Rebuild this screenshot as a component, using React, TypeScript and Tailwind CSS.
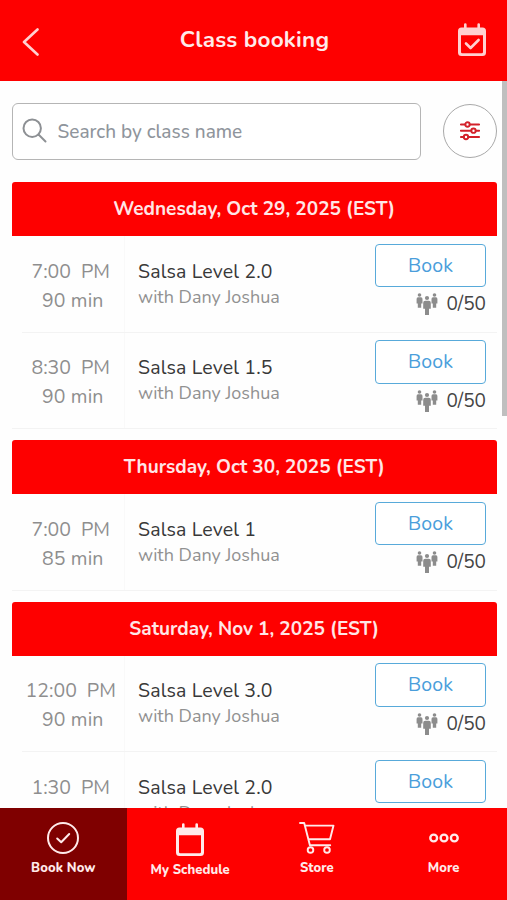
import { useState } from "react";
import type { ReactNode } from "react";

interface ClassItem {
  id: string;
  time: string;
  period: string;
  duration: string;
  name: string;
  teacher: string;
  spots: string;
}

interface Day {
  label: string;
  classes: ClassItem[];
}

const days: Day[] = [
  {
    label: "Wednesday, Oct 29, 2025 (EST)",
    classes: [
      { id: "w1", time: "7:00", period: "PM", duration: "90 min", name: "Salsa Level 2.0", teacher: "Dany Joshua", spots: "0/50" },
      { id: "w2", time: "8:30", period: "PM", duration: "90 min", name: "Salsa Level 1.5", teacher: "Dany Joshua", spots: "0/50" },
    ],
  },
  {
    label: "Thursday, Oct 30, 2025 (EST)",
    classes: [
      { id: "t1", time: "7:00", period: "PM", duration: "85 min", name: "Salsa Level 1", teacher: "Dany Joshua", spots: "0/50" },
    ],
  },
  {
    label: "Saturday, Nov 1, 2025 (EST)",
    classes: [
      { id: "s1", time: "12:00", period: "PM", duration: "90 min", name: "Salsa Level 3.0", teacher: "Dany Joshua", spots: "0/50" },
      { id: "s2", time: "1:30", period: "PM", duration: "90 min", name: "Salsa Level 2.0", teacher: "Dany Joshua", spots: "0/50" },
    ],
  },
];

function CalendarIcon({ checked = false }: { checked?: boolean }) {
  return (
    <svg className="w-[30px] h-[33px]" viewBox="0 0 30 33" fill="none">
      <path
        fill="currentColor"
        fillRule="evenodd"
        d="M7 1.5a1.3 1.3 0 0 1 2.6 0V4.500h10.800V1.500a1.300 1.300 0 0 1 2.600 0V4.500h2.500a3.500 3.500 0 0 1 3.500 3.500V29.500a3.500 3.500 0 0 1-3.500 3.500h-21A3.500 3.500 0 0 1 1 29.500V8a3.500 3.500 0 0 1 3.500-3.500H7ZM4 12.200V29a1.300 1.300 0 0 0 1.300 1.300h19.400A1.300 1.300 0 0 0 26 29V12.200Z"
      />
      {checked && (
        <path d="M9 20.500l4.600 4.500 8-8" stroke="currentColor" strokeWidth="2.600" strokeLinecap="round" strokeLinejoin="round" />
      )}
    </svg>
  );
}

function FilterIcon() {
  return (
    <svg className="w-5 h-5" viewBox="0 0 20 20" fill="none" stroke="currentColor" strokeWidth="1.900" strokeLinecap="round">
      <path d="M.8 3.500h4.500M9.700 3.500h9.500M.8 9.700h10.500M15.700 9.700h3.500M.8 16h3M8.200 16h11" />
      <circle cx="7.500" cy="3.500" r="2.200" />
      <circle cx="13.500" cy="9.700" r="2.200" />
      <circle cx="6" cy="16" r="2.200" />
    </svg>
  );
}

function PeopleIcon() {
  return (
    <svg className="w-[22px] h-[22px] text-[#8c8c8c]" viewBox="0 0 22 22" fill="currentColor">
      <circle cx="3.500" cy="2" r="1.800" />
      <path d="M2 4.300h3q1.500 0 1.500 1.600v4.700H5.200V14.800h-3.400V10.600H.6V6q0-1.700 1.400-1.700Z" />
      <circle cx="18.500" cy="2" r="1.800" />
      <path d="M17 4.300h3q1.400 0 1.400 1.700v4.600h-1.200V14.800h-3.400V10.600h-1.300V5.900q0-1.600 1.500-1.600Z" />
      <circle cx="11" cy="5" r="2.100" />
      <path d="M9.200 7.700h3.600q2 0 2 2v6h-1.800V22H9V15.700H7.200V9.700q0-2 2-2Z" />
    </svg>
  );
}

function ClassRow({ item, last }: { item: ClassItem; last: boolean }) {
  return (
    <div className={`flex h-[96.5px] border-b border-[#f3f3f3] ${last ? "" : "ml-[10px]"}`}>
      <div
        className={`shrink-0 border-r border-[#f9f9f9] pt-[20.5px] text-center text-[19.5px] leading-[29px] text-[#8e8e8e] ${
          last ? "w-[113.5px] pl-[10px]" : "w-[103.5px]"
        }`}
      >
        <div className="-ml-1 flex justify-center gap-[10px] whitespace-nowrap">
          <span>{item.time}</span>
          <span>{item.period}</span>
        </div>
        <div className="tracking-[0.15px]">{item.duration}</div>
      </div>
      <div className="flex-1 pt-[22.5px] pl-[13px] whitespace-nowrap">
        <div className="text-[19.5px] leading-[26px] tracking-[0.15px] text-[#383838]">{item.name}</div>
        <div className="text-[18px] leading-[25.5px] text-[#919191]">with {item.teacher}</div>
      </div>
      <div className="mr-[11px] flex w-[111px] shrink-0 flex-col pt-[7.5px]">
        <button className="h-[43.5px] rounded-[4px] border-[1.5px] border-[#58aada] bg-white text-[19.5px] leading-none tracking-[0.1px] text-[#4a9edb]">
          Book
        </button>
        <div className="mt-[4px] flex h-[26px] items-center justify-end gap-2">
          <PeopleIcon />
          <span className="text-[19px] leading-[26px] text-[#444]">{item.spots}</span>
        </div>
      </div>
    </div>
  );
}

const tabs: { id: string; label: string; icon: ReactNode; className: string }[] = [
  {
    id: "book",
    label: "Book Now",
    className: "pt-[14px] gap-[6px]",
    icon: (
      <svg className="size-8" viewBox="0 0 32 32" fill="none" stroke="currentColor" strokeWidth="2" strokeLinecap="round" strokeLinejoin="round">
        <circle cx="16" cy="16" r="15" />
        <path d="M10.200 16.500l4 3.800 8-8.300" />
      </svg>
    ),
  },
  {
    id: "schedule",
    label: "My Schedule",
    className: "pt-[15px] gap-[6px]",
    icon: <CalendarIcon />,
  },
  {
    id: "store",
    label: "Store",
    className: "pt-[14px] gap-[6px]",
    icon: (
      <svg className="w-9 h-8" viewBox="0 0 36 32" fill="none" stroke="currentColor" strokeWidth="1.900" strokeLinejoin="round" strokeLinecap="round">
        <path d="M1 1h4.200l5.700 22.300h20.300M6.200 3.600h28.300L31 17.300H9.800" />
        <circle cx="11.500" cy="28" r="2.800" />
        <circle cx="28" cy="28" r="2.800" />
      </svg>
    ),
  },
  {
    id: "more",
    label: "More",
    className: "pt-[14px] gap-[6px]",
    icon: (
      <svg className="w-[30px] h-8" viewBox="0 0 30 32" fill="none" stroke="currentColor" strokeWidth="2.400">
        <circle cx="4.700" cy="16" r="3.400" />
        <circle cx="15" cy="16" r="3.400" />
        <circle cx="25.300" cy="16" r="3.400" />
      </svg>
    ),
  },
];

export default function App() {
  const [activeTab, setActiveTab] = useState("book");
  const [searchTerm, setSearchTerm] = useState("");

  const visibleDays = days
    .map((day) => ({
      ...day,
      classes: day.classes.filter((c) => c.name.toLowerCase().includes(searchTerm.toLowerCase())),
    }))
    .filter((day) => day.classes.length > 0);

  return (
    <div className="flex h-[900px] w-[507px] flex-col overflow-hidden bg-[#fefefe] font-['Nunito','Lato',sans-serif]">
      {/* Header */}
      <header className="flex h-[81px] shrink-0 items-center justify-between bg-[#fe0000] pr-5 pl-[22px] text-[#ffd0d0]">
        <button className="w-[30px]">
          <svg className="mt-[2px] h-[28px] w-[18px]" viewBox="0 0 18 28" fill="none" stroke="currentColor" strokeWidth="2.600" strokeLinecap="round" strokeLinejoin="round">
            <path d="M15.500 1.500L2 14l13.500 12.500" />
          </svg>
        </button>
        <h1 className="pb-[2px] text-[22.5px] leading-7 font-bold tracking-[0.2px] text-[#ffeaea]">Class booking</h1>
        <button className="-mt-[3px]">
          <CalendarIcon checked />
        </button>
      </header>

      <div className="flex min-h-0 flex-1">
        <main className="min-w-0 flex-1 overflow-hidden pr-[5px] pl-[11.5px]">
          {/* Search */}
          <div className="flex items-center pt-[22px]">
            <label className="flex h-[57px] w-[409.5px] items-center gap-[11px] rounded-[6px] border-[1.5px] border-[#b5b5b5] bg-white pl-[9px]">
              <svg className="-mt-[2px] h-[25px] w-[25px] shrink-0 text-[#8d9094]" viewBox="0 0 25 25" fill="none" stroke="currentColor" strokeWidth="2" strokeLinecap="round">
                <circle cx="10.200" cy="10.200" r="8.700" />
                <path d="M16.500 16.500l7 7" />
              </svg>
              <input
                type="text"
                value={searchTerm}
                onChange={(e) => setSearchTerm(e.target.value)}
                placeholder="Search by class name"
                className="min-w-0 flex-1 pt-px text-[19px] font-medium text-[#383838] outline-none placeholder:text-[#8f959c]"
              />
            </label>
            <button className="-mt-px ml-[22px] flex size-[54px] items-center justify-center rounded-full border border-[#a9a9a9] bg-white text-[#d3212a]">
              <FilterIcon />
            </button>
          </div>

          {/* Schedule */}
          <div className="mt-[22px] flex flex-col gap-[11px]">
            {visibleDays.map((day) => (
              <section key={day.label}>
                <h2 className="flex h-[54px] items-center justify-center rounded-t-[3px] bg-[#fe0000] pt-px text-[19px] font-bold text-[#ffe6e6]">
                  {day.label}
                </h2>
                {day.classes.map((item, index) => (
                  <ClassRow key={item.id} item={item} last={index === day.classes.length - 1} />
                ))}
              </section>
            ))}
          </div>
        </main>
        {/* Scrollbar thumb */}
        <div className="h-[335px] w-[5px] shrink-0 bg-[#bfbfbf]" />
      </div>

      {/* Bottom navigation */}
      <nav className="grid h-[92px] shrink-0 grid-cols-4 bg-[#fe0000]">
        {tabs.map((tab) => (
          <button
            key={tab.id}
            onClick={() => setActiveTab(tab.id)}
            className={`flex flex-col items-center text-[#ffeaea] ${tab.className} ${activeTab === tab.id ? "bg-[#7f0000]" : ""}`}
          >
            {tab.icon}
            <span className="text-[13px] leading-[16px] font-extrabold tracking-[0.1px]">{tab.label}</span>
          </button>
        ))}
      </nav>
    </div>
  );
}
